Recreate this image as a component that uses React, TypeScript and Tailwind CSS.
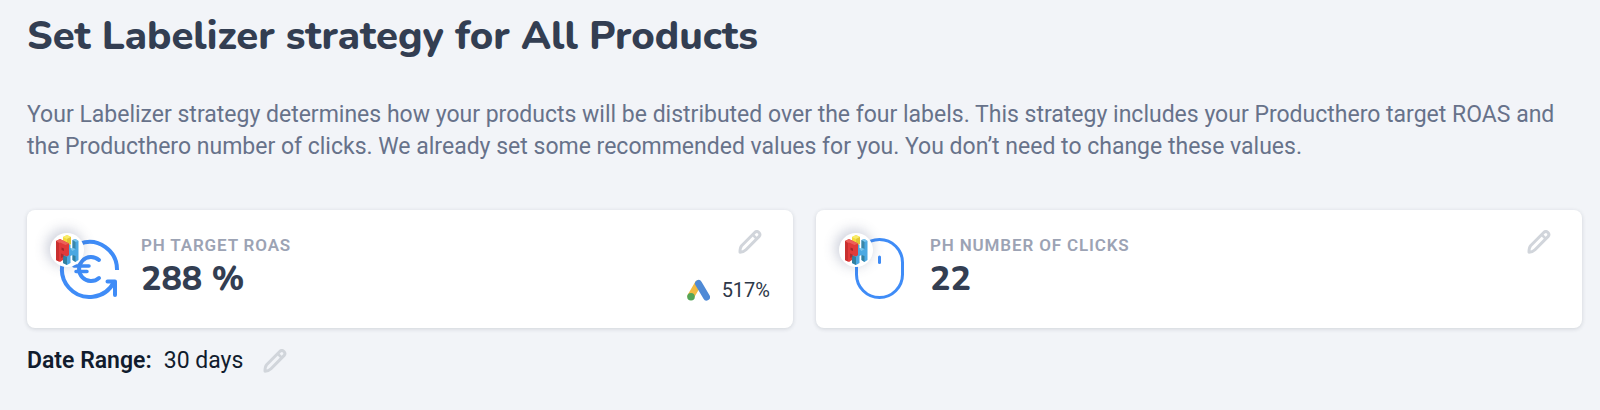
import type { ReactNode } from "react";

const PencilIcon = () => (
  <svg viewBox="0 0 24 24" fill="none" className="h-6 w-6" aria-hidden="true">
    <path
      d="M17 2.200a3 3 0 0 1 4.200 4.200L8 19.800c-1.600 1.600-3.500 2.300-6 2.400 0-2.500.2-5 1.600-6.500Z"
      stroke="currentColor"
      strokeWidth="3"
      strokeLinejoin="round"
    />
    <path d="m14.500 4.500 4.500 4.500" stroke="currentColor" strokeWidth="2.500" />
  </svg>
);

const ProductHeroLogo = () => (
  <svg viewBox="0 0 24 30" className="h-[30px] w-6" aria-hidden="true">
    {/* yellow block */}
    <path d="m8 2 4-2 4 2v7l-4 2-4-2Z" fill="#f3dc3c" />
    <path d="m8 2 4-2 4 2-4 2Z" fill="#f9ec6b" />
    <path d="m12 4 4-2v7l-4 2Z" fill="#e0c637" />
    {/* blue H */}
    <path d="m17.500 5 3-1 3 2v19l-3 2-3-2v-5l-2 1v7l-3.500 2-4-2V17l5-8 2.500 1v3l2 1Z" fill="#4aa8e2" />
    <path d="m17.500 5 3-1 3 2-3 1Z" fill="#79c4ec" />
    <path d="m17.500 5 3 2v7l-3-1Z" fill="#3a86a8" />
    <path d="m8 20 4 2v8l-4-2Z" fill="#327f9e" />
    <path d="m17.500 20 3 1v6l-3-2Z" fill="#327f9e" />
    <path d="m15.500 14 2-1 3 1-3 2Z" fill="#79c4ec" />
    {/* red P */}
    <path d="m1 6 4-2 9 4.500V20l-2 1.500-4-1.500v5l-3 2-4-2Z" fill="#e03a3a" />
    <path d="m1 6 4-2 9 4.500-3.500 1.500L5 7.500 4 8Z" fill="#ec5f59" />
    <path d="m1 6 3 2v18.500L1 25Z" fill="#c9302f" />
    <path d="m6.500 12.500 2.500 1v2.500l-2.500-1Z" fill="#a3282c" />
    <path d="m6 18.500 2.500 1V22L6 23Z" fill="#b32b2d" />
  </svg>
);

const EuroCycleIcon = () => (
  <svg
    viewBox="0 0 72 72"
    fill="none"
    stroke="#3f8cf7"
    strokeWidth="4"
    className="h-[72px] w-[72px]"
    aria-hidden="true"
  >
    <path d="M67 37A27.500 27.500 0 1 0 64 49" />
    <path d="M57.500 48.500H65V62" strokeLinecap="round" strokeLinejoin="round" />
    <path d="M49 27A12 12 0 1 0 49 45" strokeLinecap="round" />
    <path d="M24 33h15M26 38.500h11" strokeWidth="3.500" strokeLinecap="round" />
  </svg>
);

const MouseIcon = () => (
  <svg
    viewBox="0 0 72 72"
    fill="none"
    stroke="#3f8cf7"
    strokeWidth="3"
    className="h-[72px] w-[72px]"
    aria-hidden="true"
  >
    <rect x="17.500" y="6.500" width="46" height="58" rx="23" />
    <path d="M40.500 24v5.500" strokeLinecap="round" />
  </svg>
);

const GoogleAdsIcon = () => (
  <svg viewBox="0 0 24 24" className="h-6 w-6" strokeLinecap="round" aria-hidden="true">
    <path d="M12 6 5 18" stroke="#f2bb42" strokeWidth="7" />
    <path d="m12.500 5.500 8 13.500" stroke="#4f8ad6" strokeWidth="7" />
    <circle cx="5" cy="18.800" r="3.800" fill="#54a557" />
  </svg>
);

type StrategyCardProps = {
  icon: ReactNode;
  label: string;
  value: string;
  adsValue?: string;
};

const StrategyCard = ({ icon, label, value, adsValue }: StrategyCardProps) => (
  <div className="flex flex-1 rounded-lg bg-white px-[23px] py-[23px] shadow-[0_1px_4px_rgba(30,41,59,0.16)]">
    <div className="relative shrink-0">
      {icon}
      <span className="absolute top-0 left-0 flex h-[34px] w-[34px] items-center justify-center rounded-full bg-white shadow-[-2px_-2px_12px_2px_rgba(71,85,125,0.25)]">
        <ProductHeroLogo />
      </span>
    </div>
    <div className="ml-[19px] flex-1">
      <h2 className="text-[17px] leading-6 font-semibold tracking-wider text-[#9ca3b4] uppercase">
        {label}
      </h2>
      <p className="font-['Nunito','Noto_Sans',sans-serif] text-[34px] leading-11 font-extrabold text-[#333e52]">
        {value}
      </p>
    </div>
    <div className="flex flex-col items-end gap-6">
      <button type="button" aria-label={`Edit ${label}`} className="-mt-[3px] mr-2 text-[#d1d5db]">
        <PencilIcon />
      </button>
      {adsValue && (
        <div className="flex items-center gap-3 text-xl leading-6 text-[#2d3748]">
          <GoogleAdsIcon />
          <span>{adsValue}</span>
        </div>
      )}
    </div>
  </div>
);

export default function App() {
  return (
    <main className="min-h-screen bg-[#f2f4f8] pt-3 pr-[18px] pb-8 pl-[27px] font-[Roboto,sans-serif]">
      <h1 className="font-['Nunito','Noto_Sans',sans-serif] text-[40px] leading-12 font-extrabold text-[#333e52]">
        Set Labelizer strategy for All Products
      </h1>
      <p className="mt-[39px] text-[23px] leading-8 text-[#67728a]">
        Your Labelizer strategy determines how your products will be distributed over the four
        labels. This strategy includes your Producthero target ROAS and the Producthero number of
        clicks. We already set some recommended values for you. You don’t need to change these
        values.
      </p>
      <div className="mt-[47px] flex gap-[23px]">
        <StrategyCard
          icon={<EuroCycleIcon />}
          label="PH Target ROAS"
          value="288 %"
          adsValue="517%"
        />
        <StrategyCard icon={<MouseIcon />} label="PH Number of Clicks" value="22" />
      </div>
      <div className="mt-[17px] flex items-center text-[23px] leading-8 text-[#111c2e]">
        <span className="font-semibold">Date Range:</span>
        <span className="ml-3">30 days</span>
        <button type="button" aria-label="Edit date range" className="ml-5 text-[#d1d5db]">
          <PencilIcon />
        </button>
      </div>
    </main>
  );
}
